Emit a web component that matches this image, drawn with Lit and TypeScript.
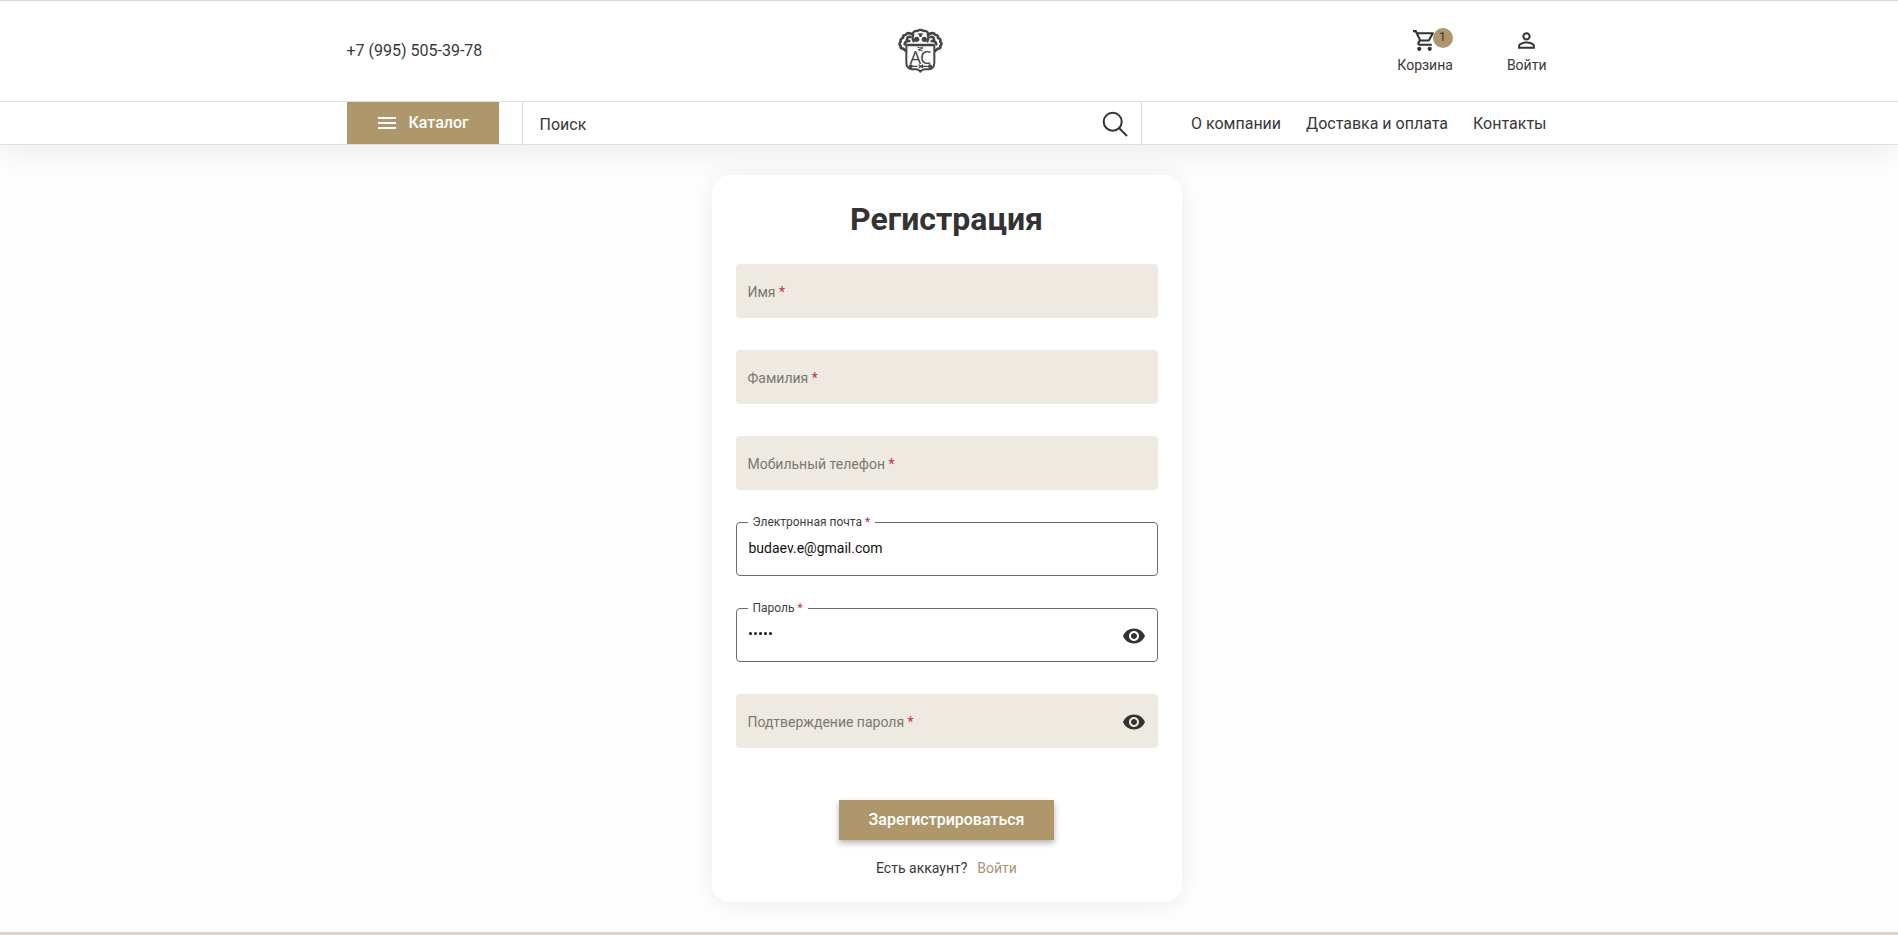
import { LitElement, html, css, svg, nothing } from "lit";
import { customElement, property } from "lit/decorators.js";

const icons = {
  cart: svg`<path d="M15.55 13c.75 0 1.41-.41 1.75-1.03l3.58-6.49A.996.996 0 0 0 20.01 4H5.21l-.94-2H1v2h2l3.6 7.59-1.35 2.44C4.52 15.37 5.48 17 7 17h12v-2H7l1.1-2h7.45zM6.16 6h12.15l-2.76 5H8.53L6.16 6zM7 18c-1.1 0-1.99.9-1.99 2S5.9 22 7 22s2-.9 2-2-.9-2-2-2zm10 0c-1.1 0-1.99.9-1.99 2s.89 2 1.99 2 2-.9 2-2-.9-2-2-2z"/>`,
  person: svg`<path d="M12 5.9c1.16 0 2.1.94 2.1 2.1s-.94 2.1-2.1 2.1S9.900 9.160 9.900 8s.94-2.100 2.100-2.100m0 9c2.970 0 6.100 1.460 6.100 2.100v1.100H5.900V17c0-.64 3.130-2.100 6.100-2.100M12 4C9.790 4 8 5.790 8 8s1.790 4 4 4 4-1.790 4-4-1.790-4-4-4zm0 9c-2.670 0-8 1.340-8 4v3h16v-3c0-2.660-5.330-4-8-4z"/>`,
  menu: svg`<path d="M3 18h18v-2H3v2zm0-5h18v-2H3v2zm0-7v2h18V6H3z"/>`,
  eye: svg`<path d="M12 4.500C7 4.500 2.730 7.610 1 12c1.730 4.390 6 7.500 11 7.500s9.270-3.110 11-7.500c-1.730-4.390-6-7.500-11-7.500zM12 17c-2.760 0-5-2.240-5-5s2.240-5 5-5 5 2.240 5 5-2.240 5-5 5zm0-8c-1.660 0-3 1.340-3 3s1.340 3 3 3 3-1.340 3-3-1.340-3-3-3z"/>`,
};

@customElement("brand-crest")
class BrandCrest extends LitElement {
  static styles = css`
    :host { display: block; width: 45px; height: 44px; }
    .crest { display: block; width: 45px; height: 44px; fill: none; stroke: #454545; stroke-linecap: round; stroke-linejoin: round; overflow: visible; }
    .solid { fill: #454545; stroke: none; }
    .letters { fill: #454545; stroke: none; font: 400 54px "Open Sans", sans-serif; letter-spacing: -3px; }
  `;
  render() {
    return html`<svg class="crest" viewBox="0 0 135 132">
      <path stroke-width="6" d="M25 50V102Q26 120 43 121H55Q63 122 67 128Q71 122 81 121H92Q108 120 109 102V50"/>
      <path stroke-width="8" d="M28 48H106"/>
      <path stroke-width="7" d="M44 14Q48 4 58 6Q67 -1 77 6Q87 4 91 14M46 16Q41 26 47 37M89 16Q94 26 88 37"/>
      <path stroke-width="8" d="M41 15Q27 9 23 18Q14 17 15 27Q6 29 8 38Q1 44 8 51Q6 59 16 59L24 66M94 15Q108 9 112 18Q121 17 120 27Q129 29 127 38Q134 44 127 51Q129 59 119 59L111 66"/>
      <path stroke-width="8" d="M37 24Q28 22 27 32M34 36Q22 34 20 46M98 24Q107 22 108 32M101 36Q113 34 115 46"/>
      <circle class="solid" cx="56" cy="31" r="8"/><circle class="solid" cx="79" cy="31" r="8"/>
      <path class="solid" d="M60 13H75L70 24H65Z"/>
      <path stroke-width="3" d="M59 55Q66 61 74 54M60 61L73 65M74 57Q65 58 63 66"/>
      <text class="letters" x="35" y="104">AC</text>
      <path stroke-width="4" d="M37 112H57M68 112H97M63 108L74 116M74 108L63 116"/>
      <circle class="solid" cx="38" cy="112" r="6"/><circle class="solid" cx="96" cy="112" r="6"/>
    </svg>`;
  }
}

@customElement("form-field")
class FormField extends LitElement {
  @property() label = "";
  @property() value = "";
  @property({ type: Boolean }) secret = false;

  static styles = css`
    :host { display: block; height: 54px; }
    .box { box-sizing: border-box; height: 54px; border-radius: 4px; display: flex; align-items: center; justify-content: space-between; padding: 2px 12px 0 11.500px; background: #eee9e1; font-size: 14px; color: #7b7873; }
    .star { color: #cf2b48; }
    .outlined { box-sizing: border-box; height: 62px; margin: -8px 0 0; padding: 0 11px 0 9px; border: 1px solid #6d6d70; border-radius: 4px; min-width: 0; }
    .legend { height: 16px; line-height: 16px; font-size: 12px; color: #3e3e42; padding: 0 5px 0 4.500px; margin: 0 0 0 2px; }
    .row { height: 45px; display: flex; justify-content: space-between; padding-left: 2.500px; }
    .value { font-size: 14px; line-height: 16px; padding-top: 10px; color: #111; }
    .dots { display: flex; gap: 2px; padding: 16px 0 0 0.500px; }
    .dot { width: 3px; height: 3px; border-radius: 50%; background: #111; }
    .eye { width: 24px; height: 24px; fill: #333; }
    .row .eye { margin-top: 8px; }
  `;
  private eye() {
    return this.secret ? html`<svg class="eye" viewBox="0 0 24 24">${icons.eye}</svg>` : nothing;
  }
  render() {
    if (!this.value) {
      return html`<div class="box"><span>${this.label} <span class="star">*</span></span>${this.eye()}</div>`;
    }
    return html`<fieldset class="outlined">
      <legend class="legend">${this.label} <span class="star">*</span></legend>
      <div class="row">
        ${this.secret
          ? html`<div class="dots">${[...this.value].map(() => html`<i class="dot"></i>`)}</div>`
          : html`<div class="value">${this.value}</div>`}
        ${this.eye()}
      </div>
    </fieldset>`;
  }
}

@customElement("app-root")
class AppRoot extends LitElement {
  static styles = css`
    :host { display: flex; flex-direction: column; height: 935px; overflow: hidden; background: #fefefe; font-family: Roboto, "Noto Sans", sans-serif; font-size: 16px; color: #383838; }
    .header { background: #fff; box-sizing: border-box; height: 145px; border-top: 1px solid #d9d9d9; border-bottom: 1px solid #e0e0e0; box-shadow: 0 10px 30px rgba(0, 0, 0, 0.065); flex: none; }
    .wrap { width: 1200px; margin-left: 346.500px; }
    .top { height: 100px; display: grid; grid-template-columns: 551.500px 45px 1fr; align-items: center; }
    .phone { line-height: 20px; }
    .actions { display: flex; justify-content: flex-end; gap: 54px; font-size: 14px; }
    .action { display: flex; flex-direction: column; align-items: center; position: relative; line-height: 16px; padding-bottom: 1px; }
    .icon { width: 25px; height: 25px; fill: #333; margin: 0 1px 4px 0; }
    .badge { position: absolute; left: 36px; top: 0; width: 20px; height: 20px; border-radius: 50%; background: #ae976a; font-size: 13px; line-height: 18px; text-align: center; text-indent: -2px; }
    .bar { border-top: 1px solid #e0e0e0; }
    .nav { height: 42px; display: flex; }
    .catalog { width: 152px; background: #ae976a; color: #fff; font-weight: 500; display: flex; align-items: center; gap: 10px; padding: 0 0 2px 28px; box-sizing: border-box; height: 42px; }
    .burger { width: 24px; height: 24px; fill: #fff; margin-top: 1px; }
    .search { box-sizing: border-box; width: 620px; height: 44px; margin-left: 23px; border: solid #dcdcdc; border-width: 0 1px; padding: 1px 13px 0 17px; display: flex; align-items: center; justify-content: space-between; }
    .lens { width: 26px; height: 26px; fill: none; stroke: #333; stroke-width: 2; margin-bottom: 2px; }
    .links { flex: 1; display: flex; justify-content: flex-end; align-items: center; gap: 25px; padding-top: 1px; }
    .main { flex: 1; padding: 30px 0 0 712px; }
    .card { box-sizing: border-box; width: 470px; height: 727px; border-radius: 18px; background: #fff; box-shadow: 0 2px 24px rgba(20, 20, 50, 0.08); padding: 24px; display: flex; flex-direction: column; align-items: center; }
    .title { font-size: 32px; line-height: 40px; font-weight: 700; margin: 0 1px 25px 0; color: #333; }
    .fields { width: 422px; display: flex; flex-direction: column; gap: 32px; }
    .submit { margin: 52px 1px 0 0; width: 215px; height: 40px; line-height: 39px; text-align: center; background: #ae976a; color: #fff; font-weight: 500; box-shadow: 0 3px 6px rgba(0, 0, 0, 0.3); }
    .hint { margin: 20px 1px 0 0; font-size: 14px; line-height: 16px; display: flex; gap: 10px; }
    .signin { color: #ae9272; }
    .footer { height: 3px; flex: none; background: #ddd4c4; }
  `;
  render() {
    return html`
      <header class="header">
        <div class="wrap top">
          <span class="phone">+7 (995) 505-39-78</span>
          <brand-crest></brand-crest>
          <div class="actions">
            <div class="action"><svg class="icon" viewBox="0 0 24 24">${icons.cart}</svg><span>Корзина</span><span class="badge">1</span></div>
            <div class="action"><svg class="icon" viewBox="0 0 24 24">${icons.person}</svg><span>Войти</span></div>
          </div>
        </div>
        <div class="bar">
          <nav class="wrap nav">
            <div class="catalog"><svg class="burger" viewBox="0 0 24 24">${icons.menu}</svg>Каталог</div>
            <div class="search"><span>Поиск</span><svg class="lens" viewBox="0 0 26 26"><circle cx="10.700" cy="10.700" r="9"/><path d="M17 17l8 8"/></svg></div>
            <div class="links"><span>О компании</span><span>Доставка и оплата</span><span>Контакты</span></div>
          </nav>
        </div>
      </header>
      <main class="main">
        <section class="card">
          <h1 class="title">Регистрация</h1>
          <div class="fields">
            <form-field label="Имя"></form-field>
            <form-field label="Фамилия"></form-field>
            <form-field label="Мобильный телефон"></form-field>
            <form-field label="Электронная почта" value="budaev.e@gmail.com"></form-field>
            <form-field label="Пароль" value="12345" secret></form-field>
            <form-field label="Подтверждение пароля" secret></form-field>
          </div>
          <div class="submit">Зарегистрироваться</div>
          <div class="hint"><span>Есть аккаунт?</span><span class="signin">Войти</span></div>
        </section>
      </main>
      <footer class="footer"></footer>`;
  }
}
